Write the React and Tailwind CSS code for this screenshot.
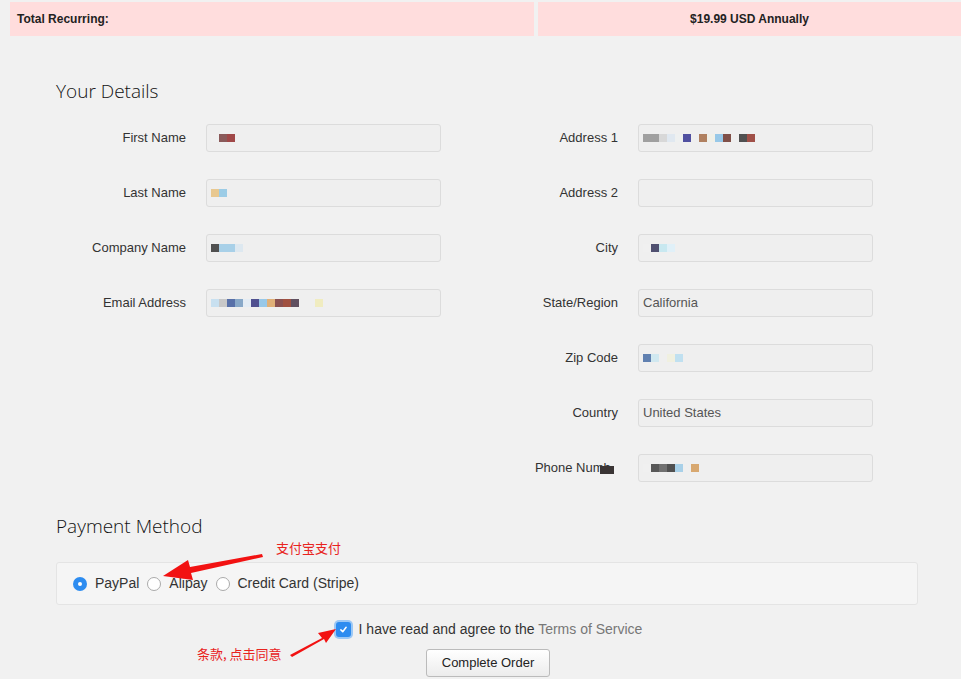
import React from 'react'

// Pixelated (redacted) values, one entry = one 8px block, null = gap
const BLOCKS = {
  first: ['#f0f0f0', '#8a5a5a', '#a04848'],
  last: ['#e8c890', '#9ccce6'],
  company: ['#505050', '#a8d0e8', '#a8d0e8', '#dde8f0'],
  email: ['#c8e0f0', '#c8c8c8', '#5870a8', '#88a8c8', '#e4ecf4', '#505090', '#98c8e8', '#e0b078', '#8a5050', '#a05040', '#605060', null, null, '#f0ecc0'],
  address1: ['#a0a0a0', '#a0a0a0', '#d8d8d8', '#e0e8f0', '#eef0f0', '#5050a0', null, '#b08060', '#f0f0e8', '#98c8e8', '#805048', null, '#505050', '#a05048'],
  city: ['#f0f0f0', '#505070', '#c8e8f0', '#e0f0f8'],
  zip: ['#6080b0', '#d0e8f0', null, '#f0f0e0', '#c0e0f0'],
  phone: ['#f0f0f0', '#585858', '#707070', '#505050', '#a8d0e8', null, '#d8a870'],
}

const LEFT = [
  { label: 'First Name', blocks: 'first' },
  { label: 'Last Name', blocks: 'last' },
  { label: 'Company Name', blocks: 'company' },
  { label: 'Email Address', blocks: 'email' },
]

const RIGHT = [
  { label: 'Address 1', blocks: 'address1' },
  { label: 'Address 2' },
  { label: 'City', blocks: 'city' },
  { label: 'State/Region', value: 'California' },
  { label: 'Zip Code', blocks: 'zip' },
  { label: 'Country', value: 'United States' },
  { label: 'Phone Number', blocks: 'phone', cover: true },
]

function Field({ label, value, blocks, cover }) {
  return (
    <div className="flex items-center gap-5 h-[28px]">
      <label className="relative w-[130px] text-right text-[13px] text-[#333] whitespace-nowrap">
        {cover ? <>Phone Numb<span className="text-transparent">e</span></> : label}
        {cover && <span className="absolute right-[4px] top-[8px] w-[14px] h-[8px] bg-[#3a3434]" />}
      </label>
      <div className="w-[235px] h-[28px] rounded-[3px] border border-[#dcdcdc] bg-[#efefef] flex items-center px-[4px] text-[13px] text-[#555]">
        {value}
        {blocks && (
          <span className="flex h-[8px]">
            {BLOCKS[blocks].map((c, i) => (
              <span key={i} className="w-[8px] h-[8px]" style={{ background: c || 'transparent' }} />
            ))}
          </span>
        )}
      </div>
    </div>
  )
}

function Radio({ checked }) {
  return checked ? (
    <span className="inline-flex shrink-0 w-[14px] h-[14px] rounded-full bg-[#2d8cf0] items-center justify-center">
      <span className="w-[4px] h-[4px] rounded-full bg-white" />
    </span>
  ) : (
    <span className="inline-block shrink-0 w-[14px] h-[14px] rounded-full border border-[#aaa] bg-white" />
  )
}

export default function App() {
  return (
    <div className="relative w-[961px] h-[679px] overflow-hidden bg-[#f1f1f1] font-['Liberation_Sans',Arial,sans-serif]">
      {/* recurring total */}
      <div className="flex gap-[4px] pl-[10px] pt-[2px]">
        <div className="w-[524px] h-[34px] bg-[#ffdddd] flex items-center px-[7px] text-[12px] font-bold text-[#222]">
          Total Recurring:
        </div>
        <div className="flex-1 h-[34px] bg-[#ffdddd] flex items-center justify-center text-[12px] font-bold text-[#222]">
          $19.99 USD Annually
        </div>
      </div>

      <div className="pl-[56px]">
        <h2 className="mt-[41px] text-[19px] leading-[28px] font-light text-[#111] font-['Open_Sans',sans-serif]">Your Details</h2>

        <div className="mt-[19px] flex">
          <div className="w-[432px] flex flex-col gap-[27px]">
            {LEFT.map((f) => <Field key={f.label} {...f} />)}
          </div>
          <div className="flex flex-col gap-[27px]">
            {RIGHT.map((f) => <Field key={f.label} {...f} />)}
          </div>
        </div>

        <h2 className="mt-[30px] text-[19px] leading-[28px] font-light text-[#111] font-['Open_Sans',sans-serif]">Payment Method</h2>

        <div className="mt-[22px] w-[862px] h-[43px] rounded-[3px] border border-[#e4e4e4] bg-[#f5f5f5] flex items-center pl-[16px] text-[14px] text-[#333]">
          <Radio checked />
          <span className="ml-[8px]">PayPal</span>
          <span className="ml-[8px] flex"><Radio /></span>
          <span className="ml-[8px]">Alipay</span>
          <span className="ml-[8px] flex"><Radio /></span>
          <span className="ml-[8px]">Credit Card (Stripe)</span>
        </div>

        <div className="mt-[14px] flex items-center justify-center w-[862px] pl-[4px] text-[14px] text-[#333]">
          <span className="w-[15px] h-[15px] rounded-[3px] bg-[#2d8cf0] ring-2 ring-[#9cc8f5] flex items-center justify-center">
            <svg width="9" height="9" viewBox="0 0 12 12" fill="none" stroke="white" strokeWidth="2" strokeLinecap="round" strokeLinejoin="round"><path d="M2.5 6.5 5 9l4.5-6" /></svg>
          </span>
          <span className="ml-[8px]">I have read and agree to the <span className="text-[#777]">Terms of Service</span></span>
        </div>

        <div className="mt-[9px] flex justify-center w-[862px] pl-[2px]">
          <button className="w-[124px] h-[28px] rounded-[3px] border border-[#bbb] bg-gradient-to-b from-white to-[#ececec] text-[13px] text-[#222]">
            Complete Order
          </button>
        </div>
      </div>

      {/* annotations */}
      <span className="absolute left-[276px] top-[538px] text-[13px] text-[#e8231e] font-['Noto_Sans_CJK_SC',sans-serif]">支付宝支付</span>
      <span className="absolute left-[197px] top-[644px] text-[13px] text-[#e8231e] font-['Noto_Sans_CJK_SC',sans-serif]">条款, 点击同意</span>
      <svg className="absolute left-0 top-0 pointer-events-none" width="961" height="679">
        <path d="M262 554 L190 567 L188 560 L163 576 L193 580 L191 573 L263 557 Z" fill="#f21212" />
        <path d="M290 655 L322 638 L318 633 L336 629 L326 643 L324 639 L292 657 Z" fill="#f21212" />
      </svg>
    </div>
  )
}
